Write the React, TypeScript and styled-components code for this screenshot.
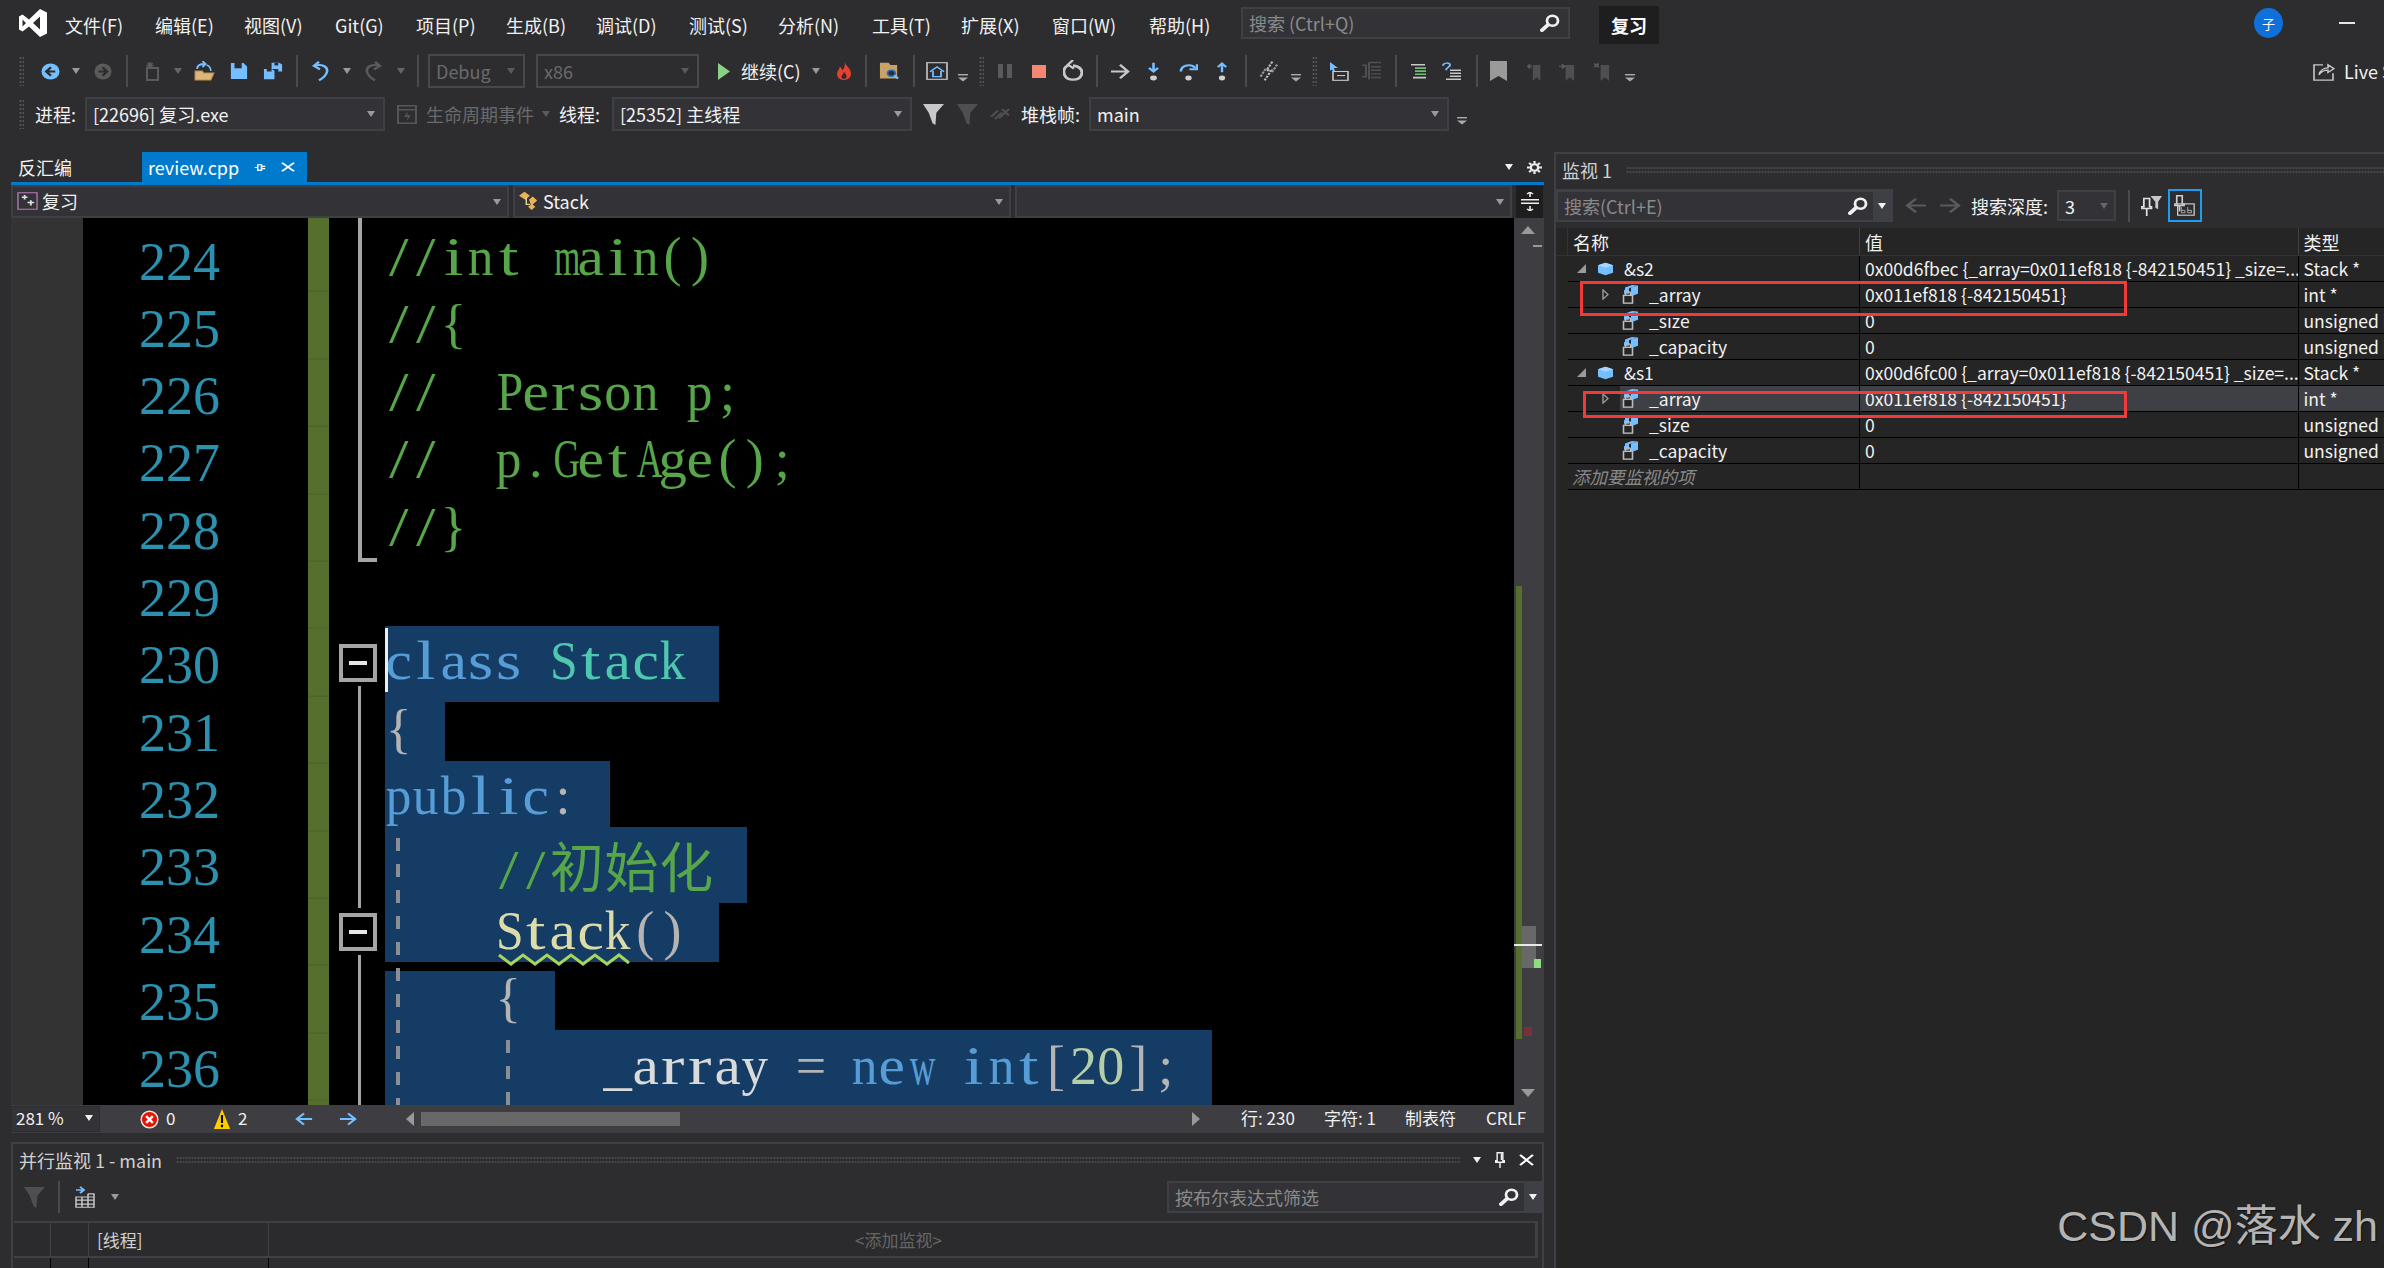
import React from 'react';
import styled, { createGlobalStyle } from 'styled-components';

const UI = `"Noto Sans CJK SC", "Noto Sans", sans-serif`;

const Global = createGlobalStyle`
  html, body { margin: 0; padding: 0; background: #2d2d30; }
  * { box-sizing: border-box; }
  #root { width: 2384px; height: 1268px; }
`;

const Page = styled.div`
  position: relative; width: 2384px; height: 1268px; overflow: hidden;
  background: #2d2d30; color: #f1f1f1; font: 18px/1 ${UI};
  display: flex; flex-direction: column;
`;

/* ---------- menu bar ---------- */
const MenuBar = styled.div`
  height: 46px; display: flex; align-items: center; flex: none; position: relative;
`;
const LogoBox = styled.div`margin-left: 17px; width: 32px; height: 32px; flex: none;`;
const MenuItem = styled.span<{ $ml: number }>`
  margin-left: ${p => p.$ml}px; color: #f1f1f1; font-size: 18px; white-space: nowrap; width: 58px; margin-top: 4px;
`;
const SearchBox = styled.div`
  margin-left: 34px; width: 329px; height: 32px; margin-top: -1px; background: #333337; border: 2px solid #3f3f46;
  display: flex; align-items: center; justify-content: space-between; padding: 0 8px 0 6px; color: #8a8a8a; font-size: 18px;
`;
const ProjectBadge = styled.div`
  margin-left: 29px; width: 60px; height: 38px; margin-top: 4px; background: #1e1e1e; color: #fff; font-weight: 700;
  display: flex; align-items: center; justify-content: center; font-size: 18px;
`;
const Avatar = styled.div`
  margin-left: 595px; width: 29px; height: 30px; border-radius: 50%; background: #0e70d8; color: #fff; font-size: 13px;
  display: flex; align-items: center; justify-content: center;
`;
const Minimize = styled.div`margin-left: 56px; width: 16px; height: 2px; background: #e6e6e6;`;

/* ---------- tool bars ---------- */
const ToolBar = styled.div<{ $h: number }>`
  height: ${p => p.$h}px; flex: none; display: flex; align-items: center;
`;
const Slot = styled.div<{ $w: number; $ml: number; $low?: boolean }>`
  width: ${p => p.$w}px; margin-left: ${p => p.$ml}px; flex: none; display: flex; align-items: center; justify-content: center;
  margin-top: ${p => (p.$low ? 14 : 0)}px;
  svg { display: block; }
`;
const Grip = styled.div<{ $ml: number }>`
  width: 5px; height: 30px; margin-left: ${p => p.$ml}px; flex: none;
  background: radial-gradient(circle, #55555a 1px, transparent 1.2px) 0 0 / 3px 4px;
`;
const Sep = styled.div<{ $ml: number }>`
  width: 2px; height: 32px; margin-left: ${p => p.$ml}px; background: #4a4a4f; flex: none;
`;
const Combo = styled.div<{ $w: number; $ml: number; $off?: boolean; $h?: number }>`
  width: ${p => p.$w}px; height: ${p => p.$h ?? 34}px; margin-left: ${p => p.$ml}px; flex: none; display: flex; align-items: center;
  justify-content: space-between; padding: 0 8px 0 6px; font-size: 18px; white-space: nowrap;
  border: 2px solid ${p => (p.$off ? '#47474c' : '#3f3f46')};
  background: ${p => (p.$off ? 'transparent' : '#333337')};
  color: ${p => (p.$off ? '#6a6a6a' : '#f1f1f1')};
`;
const Caret = styled.span<{ $c?: string }>`
  width: 0; height: 0; flex: none; border-left: 4.5px solid transparent; border-right: 4.5px solid transparent;
  border-top: 6px solid ${p => p.$c ?? '#9a9a9a'};
`;
const Label = styled.span<{ $ml: number; $w?: number; $c?: string }>`
  margin-left: ${p => p.$ml}px; ${p => (p.$w ? `width:${p.$w}px;` : '')} color: ${p => p.$c ?? '#f1f1f1'}; font-size: inherit; white-space: nowrap; flex: none;
`;

/* ---------- workspace ---------- */
const Workspace = styled.div`flex: 1; min-height: 0; display: flex; padding-top: 20px;`;
const LeftCol = styled.div`margin-left: 11px; width: 1533px; flex: none; display: flex; flex-direction: column; min-width: 0;`;

const TabStrip = styled.div`height: 30px; flex: none; display: flex; align-items: stretch; position: relative;`;
const DimTab = styled.div`width: 131px; padding-left: 7px; display: flex; align-items: center; font-size: 18px; color: #f1f1f1;`;
const ActiveTab = styled.div`
  width: 165px; background: #007acc; color: #fff; display: flex; align-items: center; padding-left: 6px; font-size: 18px;
`;
const TabIcons = styled.div`margin-left: auto; display: flex; align-items: center; gap: 14px; padding-right: 2px;`;
const BlueRule = styled.div`height: 3px; background: #007acc; flex: none;`;

const NavBar = styled.div`height: 33px; flex: none; display: flex; gap: 4px; padding-top: 0;`;
const NavCombo = styled.div<{ $w: number }>`
  width: ${p => p.$w}px; flex: none; background: #333337; border: 2px solid #3f3f46; display: flex; align-items: center;
  justify-content: space-between; padding: 0 6px 0 4px; font-size: 18px; color: #f1f1f1;
`;
const NavLabel = styled.span`display: flex; align-items: center; gap: 4px; margin-top: -2px;`;
const SplitBtn = styled.div`
  width: 27px; flex: none; margin-left: 0; background: #1e1e1e; display: flex; align-items: center; justify-content: center;
`;

const EditorRow = styled.div`height: 887px; flex: none; display: flex; overflow: hidden; position: relative; background: #000;`;
const LeftMargin = styled.div`width: 72px; flex: none; background: #333333;`;
const Numbers = styled.div`
  width: 137px; flex: none; padding: 10.6px 0 0 0; text-align: right; color: #2b91af;
  font: 54px/67.3px "Liberation Serif", serif;
`;
const NumberLine = styled.div`height: 67.3px;`;
const Spacer = styled.div`width: 88px; flex: none;`;
const ChangeBar = styled.div`
  width: 21px; flex: none; background: repeating-linear-gradient(180deg, #576f2e 0, #576f2e 66.4px, #4a5f27 66.4px, #4a5f27 67.4px);
  background-position: 0 6.6px;
`;
const Outline = styled.div`width: 56px; flex: none; position: relative;`;
const OutlineLine = styled.div<{ $top: number; $h?: number }>`
  position: absolute; left: 29px; width: 3px; top: ${p => p.$top}px; height: ${p => p.$h}px; background: #a5a5a5;
`;
const OutlineEnd = styled.div`
  position: absolute; left: 29px; top: 0; width: 19px; height: 344px;
  border-left: 4px solid #a5a5a5; border-bottom: 4px solid #a5a5a5;
`;
const FoldBox = styled.div<{ $top: number }>`
  position: absolute; left: 10px; top: ${p => p.$top}px; width: 38px; height: 38px; background: #000; border: 4px solid #a5a5a5;
  display: flex; align-items: center; justify-content: center;
  &::after { content: ''; width: 18px; height: 4px; background: #e6e6e6; }
`;
const CodeArea = styled.div`flex: 1; min-width: 0; position: relative; isolation: isolate; padding-top: 6px; overflow: hidden;`;
const CodeLine = styled.div`height: 67.4px; white-space: pre;`;
const CodeText = styled.span<{ $sel?: boolean; $t?: number; $b?: number }>`
  position: relative; display: inline-block; height: 67.4px; padding-right: ${p => (p.$sel ? 33 : 0)}px;
  font: 54px/67.4px "Liberation Serif", "Noto Sans CJK SC", serif; white-space: pre;
  &::before {
    content: ''; position: absolute; left: 0; right: 0; z-index: -1;
    top: ${p => p.$t ?? 0}px; bottom: ${p => p.$b ?? 0}px;
    background: ${p => (p.$sel ? '#143c65' : 'transparent')};
  }
`;
const Cell = styled.span<{ $wide?: boolean; $c: string; $sx?: number }>`
  display: inline-block; width: ${p => (p.$wide ? 54.8 : 27.4)}px; text-align: center; color: ${p => p.$c};
  transform: scaleX(${p => p.$sx ?? 1});
  font-family: ${p => (p.$wide ? `"Noto Sans CJK SC", sans-serif` : `"Liberation Serif", serif`)};
`;
const Caretline = styled.div`position: absolute; left: 0; top: 410px; width: 3px; height: 64px; background: #eee;`;
const Guide = styled.div<{ $left: number; $top: number }>`
  position: absolute; left: ${p => p.$left}px; top: ${p => p.$top}px; bottom: 0; width: 4px;
  background: repeating-linear-gradient(180deg, #8a8f96 0, #8a8f96 13px, transparent 13px, transparent 26px);
`;
const Squiggle = styled.svg`position: absolute; left: 113px; top: 735px;`;

const VScroll = styled.div`width: 30px; flex: none; background: #3e3e42; position: relative; margin-left: auto;`;
const ArrowUp = styled.div`
  position: absolute; left: 7px; top: 8px; width: 0; height: 0; border-left: 7px solid transparent; border-right: 7px solid transparent; border-bottom: 8px solid #999;
`;
const ArrowDown = styled.div`
  position: absolute; left: 7px; bottom: 8px; width: 0; height: 0; border-left: 7px solid transparent; border-right: 7px solid transparent; border-top: 8px solid #999;
`;
const Mark = styled.div<{ $l: number; $t: number; $w: number; $h: number; $c: string }>`
  position: absolute; left: ${p => p.$l}px; top: ${p => p.$t}px; width: ${p => p.$w}px; height: ${p => p.$h}px; background: ${p => p.$c};
`;

const StatusBar = styled.div`
  height: 28px; flex: none; background: #3e3e42; display: flex; align-items: center; font-size: 17px; color: #f1f1f1;
`;
const StatusText = styled(Label)`margin-top: -3px;`;
const ZoomBox = styled.div`
  width: 89px; height: 26px; background: #333337; border: 1px solid #2d2d30; display: flex; align-items: center; justify-content: space-between;
  padding: 0 6px 3px 4px; flex: none; font-size: 17px;
`;
const HThumb = styled.div`width: 259px; height: 14px; background: #686868; margin-left: 7px; flex: none;`;
const TriLeft = styled.div<{ $ml: number }>`
  margin-left: ${p => p.$ml}px; width: 0; height: 0; flex: none; border-top: 7px solid transparent; border-bottom: 7px solid transparent; border-right: 8px solid #999;
`;
const TriRight = styled.div<{ $ml: number }>`
  margin-left: ${p => p.$ml}px; width: 0; height: 0; flex: none; border-top: 7px solid transparent; border-bottom: 7px solid transparent; border-left: 8px solid #999;
`;

/* parallel watch */
const ParallelPanel = styled.div`
  margin-top: 9px; flex: 1; min-height: 0; border: 2px solid #3f3f46; border-bottom: none; display: flex; flex-direction: column; background: #2d2d30;
`;
const PanelTitle = styled.div<{ $h: number }>`
  height: ${p => p.$h}px; flex: none; display: flex; align-items: center; color: #d0d0d0; padding: 0 0 3px 6px; font-size: 18px;
`;
const TitleGrip = styled.div`
  flex: 1; height: 8px; margin-left: 14px;
  background: radial-gradient(circle, #4a4a4e 1px, transparent 1.2px) 0 0 / 3px 4px;
`;
const PanelBtns = styled.div`display: flex; align-items: center; gap: 14px; margin: 0 8px 0 12px;`;
const ParallelTools = styled.div`height: 36px; margin-bottom: 6px; flex: none; display: flex; align-items: center;`;
const FilterInput = styled.div`
  width: 375px; height: 32px; margin-left: auto; background: #3f3f46; display: flex; align-items: center; padding-right: 4px; flex: none;
`;
const FilterInner = styled.div`
  flex: 1; height: 28px; background: #333337; margin: 2px 0 2px 2px; display: flex; align-items: center; justify-content: space-between;
  color: #8a8a8a; font-size: 18px; padding: 0 5px 0 6px;
`;
const ParHead = styled.div`
  margin-left: 1px; margin-right: 4px; height: 37px; flex: none; background: #2b2b2e; border-top: 2px solid #3f3f46; border-bottom: 2px solid #3f3f46; display: flex; border-right: 2px solid #3f3f46; font-size: 17px;
`;
const ParCol = styled.div<{ $w: number }>`
  width: ${p => p.$w}px; flex: ${p => (p.$w ? 'none' : 1)}; border-right: 1px solid #3f3f46; display: flex; align-items: center; padding-left: 8px; color: #d0d0d0;
`;
const ParHint = styled.span`margin-left: 578px; color: #656565;`;
const ParBody = styled.div`flex: 1; margin-left: 1px; display: flex;`;
const ParBodyCol = styled.div<{ $w: number }>`width: ${p => p.$w}px; border-right: 1px solid #000; flex: none;`;

/* watch panel */
const WatchPanel = styled.div`
  margin-left: 10px; flex: 1; min-width: 0; border-left: 2px solid #3f3f46; border-top: 2px solid #3f3f46; display: flex; flex-direction: column; background: #252526;
`;
const WatchTop = styled.div`background: #2d2d30; flex: none;`;
const WatchTools = styled.div`height: 33px; margin-bottom: 6px; display: flex; align-items: center;`;
const WatchSearch = styled.div`
  width: 337px; height: 33px; flex: none; background: #3f3f46; display: flex; align-items: center; padding-right: 6px;
`;
const WatchHead = styled.div`height: 28px; display: flex; align-items: stretch; background: #252526; font-size: 18px; border-bottom: 1px solid #333; flex: none;`;
const HeadLead = styled.div`width: 12px; border-right: 1px solid #333; flex: none;`;
const HeadCell = styled.div<{ $w: number }>`
  width: ${p => p.$w}px; flex: none; padding-left: 5px; display: flex; align-items: center; border-right: 1px solid #3f3f46; color: #f1f1f1;
`;
const Rows = styled.div`position: relative; flex: 1;`;
const Row = styled.div`
  height: 26px; display: flex; align-items: stretch; font-size: 17.5px; color: #f1f1f1; padding-left: 12px;
`;
const NameCell = styled.div<{ $hot?: boolean }>`
  width: 292px; flex: none; border-bottom: 1px solid #000; border-right: 1px solid #000; display: flex; align-items: center; position: relative;
  background: ${p => (p.$hot ? 'linear-gradient(90deg, transparent 52px, #3f3f46 52px)' : 'transparent')};
`;
const ValCell = styled.div<{ $w: number; $hot?: boolean }>`
  width: ${p => p.$w}px; flex: none; padding-left: 5px; white-space: nowrap; overflow: hidden; display: flex; align-items: center;
  border-bottom: 1px solid #000; border-right: 1px solid #000; background: ${p => (p.$hot ? '#3f3f46' : 'transparent')};
`;
const Indent = styled.div<{ $w: number }>`width: ${p => p.$w}px; flex: none; display: flex; align-items: center; justify-content: flex-end;`;
const AddHint = styled.span`color: #8a8a8a; font-style: italic; padding-left: 4px;`;
const RedBox = styled.div<{ $t: number; $l: number; $h: number }>`
  position: absolute; top: ${p => p.$t}px; left: ${p => p.$l}px; width: ${p => 571 - p.$l}px; height: ${p => p.$h}px; border: 3px solid #f33a3a;
`;
const DepthCombo = styled.div`
  width: 59px; height: 31px; margin-left: 9px; flex: none; border: 2px solid #3f3f46; background: #333337; display: flex; align-items: center; justify-content: space-between; padding: 0 6px;
`;
const ActiveBtn = styled.div`
  width: 34px; height: 33px; margin-left: 6px; border: 2px solid #1e9cf0; background: #2d2d30; display: flex; align-items: center; justify-content: center; flex: none;
`;
const Watermark = styled.div`
  position: absolute; right: 6px; bottom: 20px; font: 43px/1 "Liberation Sans", "Noto Sans CJK SC", sans-serif; color: #b4b4b4; white-space: nowrap; text-shadow: 1px 1px 1px #111;
`;

/* ---------- icons ---------- */
const P = ({ w, h, vw, vh, children }: { w: number; h: number; vw: number; vh: number; children: React.ReactNode }) => (
  <svg width={w} height={h} viewBox={`0 0 ${vw} ${vh}`} fill="none" preserveAspectRatio="none">{children}</svg>
);
const Logo = () => (
  <P w={32} h={32} vw={32} vh={32}>
    <path fillRule="evenodd" fill="#fff" d="M23 2 L30 5.5 V26.5 L23 30 L12 19.5 L5.5 24.5 L2 22.5 V9.5 L5.5 7.5 L12 12.5 Z M23 9.5 L16 16 L23 22.5 Z M5.5 12.5 V19.5 L9 16 Z" />
  </P>
);
const Circle = ({ c, dir, w, h }: { c: string; dir: 1 | -1; w: number; h: number }) => (
  <P w={w} h={h} vw={20} vh={20}><circle cx="10" cy="10" r="9.5" fill={c} /><path d={dir < 0 ? 'M10.5 5 L5.5 10 L10.5 15 M6 10 H15' : 'M9.5 5 L14.5 10 L9.5 15 M14 10 H5'} stroke="#2d2d30" strokeWidth="2.6" /></P>
);
const NewItem = () => (
  <P w={20} h={20} vw={20} vh={20}><path d="M5 7 H16 V19 H5 Z" stroke="#5a5a5a" strokeWidth="2" /><path d="M8 1 V8 M4.5 4.5 H11.5 M5.5 2 L10.5 7 M10.5 2 L5.5 7" stroke="#5a5a5a" strokeWidth="1.6" /></P>
);
const OpenIcon = () => (
  <P w={21} h={20} vw={20} vh={20}><path d="M1 10 H8 L9 12 H19 L16 19 H1 Z" fill="#dcb67a" stroke="#c09048" strokeWidth="1" /><path d="M3 8 C3 4 6 3 10 3 M8 0 L11 3 L8 6" stroke="#75beff" strokeWidth="1.8" /><path d="M16 10 C16 7 15 5 12 4" stroke="#75beff" strokeWidth="1.5" /></P>
);
const SaveIcon = () => (
  <P w={18} h={18} vw={20} vh={20}><path d="M1 1 H15 L19 5 V19 H1 Z" fill="#75beff" /><path d="M5 1 H13 V7 H5 Z" fill="#2d2d30" /></P>
);
const SaveAll = () => (
  <P w={21} h={19} vw={22} vh={22}><path d="M9 1 H17 L20 3 V11 H16 V8 H9 Z" fill="#75beff" /><path d="M12 1 H16 V4 H12 Z" fill="#2d2d30" /><path d="M1 8 H9 L12 10 V20 H1 Z" fill="#75beff" /><path d="M4 8 H9 V11 H4 Z" fill="#2d2d30" /></P>
);
const UndoShape = styled.span<{ $flip?: boolean }>`display: block; transform: ${p => (p.$flip ? 'scaleX(-1)' : 'none')};`;
const UndoIcon = ({ c, flip }: { c: string; flip?: boolean }) => (
  <UndoShape $flip={flip}>
    <P w={18} h={22} vw={18} vh={26}>
      <path d="M8 2 L3 7 L9 11" stroke={c} strokeWidth="2.6" /><path d="M3 7 C11 4 17 8 16 14 C15 19 11 22 8 24" stroke={c} strokeWidth="2.6" />
    </P>
  </UndoShape>
);
const PlayIcon = () => (<P w={12} h={17} vw={12} vh={18}><path d="M0 0 L12 9 L0 18 Z" fill="#89d185" /></P>);
const Flame = () => (
  <P w={14} h={18} vw={15} vh={24}><path d="M8 0 C9 5 15 8 15 16 C15 20 12 24 7.5 24 C3 24 0 20 0 16 C0 12 3 10 3 6 C5 8 5 10 6 11 C8 8 9 4 8 0 Z" fill="#e8402f" /><path d="M7.5 13 C9 16 11 17 10 21 C9 23 6 23 5 21 C4 18 7 17 7.5 13 Z" fill="#2d2d30" /></P>
);
const FolderFind = () => (
  <P w={21} h={18} vw={22} vh={24}><path d="M1 1 H10 L12 4 H19 V22 H1 Z" fill="#c9a267" /><circle cx="13" cy="15" r="4" stroke="#1e6fb8" strokeWidth="2" fill="#2d2d30" /><path d="M16 18 L20 22" stroke="#75beff" strokeWidth="2.4" /></P>
);
const HomeBox = () => (
  <P w={22} h={18} vw={22} vh={26}><rect x="1" y="1" width="20" height="24" stroke="#c8c8c8" strokeWidth="1.6" /><path d="M4 14 L11 7 L18 14 M7 13 V21 H15 V13" stroke="#75beff" strokeWidth="1.8" /></P>
);
const Overflow = () => (
  <P w={10} h={8} vw={10} vh={14}><rect y="0" width="10" height="2.5" fill="#aaa" /><path d="M0 6 H10 L5 13 Z" fill="#aaa" /></P>
);
const Pause = () => (<P w={14} h={14} vw={14} vh={20}><rect width="5" height="20" fill="#5a5a5a" /><rect x="9" width="5" height="20" fill="#5a5a5a" /></P>);
const Stop = () => <P w={14} h={13} vw={14} vh={20}><rect width="14" height="20" fill="#f48771" /></P>;
const Restart = () => (
  <P w={20} h={22} vw={20} vh={28}><path d="M6 6 C1 9 0 14 1.5 19 C4 27 16 27 18.5 19 C20 13 17 8 10 7" stroke="#c8c8c8" strokeWidth="3" /><path d="M10 0 L5 6 L11 11" stroke="#c8c8c8" strokeWidth="2.6" /></P>
);
const ArrowRight = ({ c = '#c8c8c8', w = 20, h = 17 }: { c?: string; w?: number; h?: number }) => (
  <P w={w} h={h} vw={20} vh={20}><path d="M1 10 H18 M10 2 L18 10 L10 18" stroke={c} strokeWidth="2.6" /></P>
);
const ArrowLeft = ({ c = '#c8c8c8', w = 20, h = 17 }: { c?: string; w?: number; h?: number }) => (
  <P w={w} h={h} vw={20} vh={20}><path d="M19 10 H2 M10 2 L2 10 L10 18" stroke={c} strokeWidth="2.6" /></P>
);
const StepInto = () => (
  <P w={13} h={19} vw={13} vh={26}><path d="M6.5 1 V12 M2 8 L6.5 13 L11 8" stroke="#75beff" strokeWidth="2.6" /><circle cx="6.5" cy="22" r="3.4" fill="#d0d0d0" /></P>
);
const StepOut = () => (
  <P w={13} h={19} vw={13} vh={26}><path d="M6.5 14 V3 M2 7 L6.5 2 L11 7" stroke="#75beff" strokeWidth="2.6" /><circle cx="6.5" cy="22" r="3.4" fill="#d0d0d0" /></P>
);
const StepOver = () => (
  <P w={19} h={19} vw={20} vh={26}><path d="M2 13 C2 4 13 2 17 8" stroke="#75beff" strokeWidth="2.8" /><path d="M11 10 H19 V3" stroke="#75beff" strokeWidth="2.6" /><circle cx="10" cy="22" r="3.4" fill="#d0d0d0" /></P>
);
const Hatch = () => (
  <P w={21} h={20} vw={22} vh={28}><path d="M15 1 L9 13 L14 13 L7 27" stroke="#bdbdbd" strokeWidth="2.4" strokeDasharray="3 1.5" /><path d="M20 5 L14 17 M8 11 L2 23" stroke="#9a9a9a" strokeWidth="2.4" strokeDasharray="3 1.5" /></P>
);
const CursorBox = () => (
  <P w={20} h={19} vw={20} vh={28}><path d="M1 0 L9 9 H5 L6 14 H4 L3 11 L1 13 Z" fill="#75beff" /><rect x="4" y="14" width="15" height="13" stroke="#c8c8c8" strokeWidth="1.6" /><path d="M8 20 H16" stroke="#c8c8c8" strokeWidth="1.6" /></P>
);
const DimLines = () => (
  <P w={22} h={20} vw={22} vh={28}><path d="M1 6 H5 V22 H1 M8 2 H20 M10 8 H20 M10 13 H20 M10 18 H20 M10 23 H20 M8 2 V26" stroke="#4f4f4f" strokeWidth="2" /></P>
);
const IndentA = () => (
  <P w={16} h={15} vw={16} vh={22}><path d="M0 1 H14 M2 20 H15" stroke="#c8c8c8" strokeWidth="2.4" /><path d="M4 6 H15 M4 10.5 H15 M4 15 H15" stroke="#6fbf73" strokeWidth="2.4" /></P>
);
const IndentB = () => (
  <P w={20} h={18} vw={20} vh={24}><path d="M1 5 C1 1 8 0 8 4 C8 7 4 7 4 11" stroke="#75beff" strokeWidth="2" /><path d="M8 11 H19 M8 15 H19 M8 19 H19 M4 23 H19" stroke="#c8c8c8" strokeWidth="1.8" /></P>
);
const Bookmark = () => (
  <P w={17} h={20} vw={17} vh={28}><path d="M0 0 H17 V28 L8.5 21 L0 28 Z" fill="#9a9a9a" /></P>
);
const BookmarkSm = ({ mark }: { mark: string }) => (
  <P w={17} h={19} vw={18} vh={26}><path d="M7 4 H16 V26 L11.5 21 L7 26 Z" fill="#4f4f4f" /><path d={mark} stroke="#5a5a5a" strokeWidth="2" /></P>
);
const Filter = ({ c = '#c8c8c8' }: { c?: string }) => (
  <P w={21} h={21} vw={22} vh={24}><path d="M0 0 H22 L14 10 L13 24 L10 22 L6 10 Z" fill={c} /></P>
);
const Broken = () => (
  <P w={22} h={14} vw={22} vh={20}><path d="M2 14 L9 5 M6 17 L13 8 M10 16 L20 3 M13 3 L20 12" stroke="#4f4f4f" strokeWidth="2.4" /></P>
);
const Magnifier = () => (
  <P w={20} h={18} vw={20} vh={20}><circle cx="12.5" cy="7.5" r="5.5" stroke="#f1f1f1" strokeWidth="2.8" /><path d="M8 12 L2 18" stroke="#f1f1f1" strokeWidth="4" strokeLinecap="round" /></P>
);
const LifeIcon = () => (
  <P w={20} h={19} vw={20} vh={24}><rect x="1" y="1" width="18" height="22" stroke="#555" strokeWidth="2" /><path d="M1 6 H19" stroke="#555" strokeWidth="2" /><path d="M11 8 L7 15 H11 L9 21 L14 13 H10 Z" fill="#555" /></P>
);
const PinH = () => (
  <P w={12} h={9} vw={16} vh={16}><path d="M1 8 H5 M5 3 H10 V13 H5 Z M10 6 H15 M10 10 H15" stroke="#fff" strokeWidth="2" /></P>
);
const PinV = () => (
  <P w={10} h={16} vw={14} vh={22}><path d="M3 1 H11 V12 H13 V14 H1 V12 H3 Z M7 14 V22" stroke="#f1f1f1" strokeWidth="2" /><path d="M8 2 H10 V11 H8 Z" fill="#f1f1f1" /></P>
);
const Close = ({ w = 14, h = 10 }: { w?: number; h?: number }) => (
  <P w={w} h={h} vw={14} vh={14}><path d="M1 1 L13 13 M13 1 L1 13" stroke="#fff" strokeWidth="2.2" /></P>
);
const Gear = () => (
  <P w={15} h={13} vw={16} vh={16}><circle cx="8" cy="8" r="4" stroke="#eee" strokeWidth="2.6" /><path d="M8 0 V3 M8 13 V16 M0 8 H3 M13 8 H16 M2.3 2.3 L4.4 4.4 M11.6 11.6 L13.7 13.7 M2.3 13.7 L4.4 11.6 M11.6 4.4 L13.7 2.3" stroke="#eee" strokeWidth="2.4" /></P>
);
const ProjIcon = () => (
  <P w={21} h={18} vw={22} vh={24}><rect x="1" y="1" width="20" height="22" stroke="#b57ab5" strokeWidth="1.4" /><path d="M5 7 H11 M8 4 V10 M11 14 H18 M14.5 11 V18" stroke="#ddd" strokeWidth="2" /></P>
);
const ClassIcon = () => (
  <P w={20} h={19} vw={22} vh={24}><path d="M0 6 L6 1 L12 6 L7 11 Z" fill="#e8b45a" /><path d="M11 11 L15 7 L20 12 L15 17 L18 20 L14 24 L10 20 L13 17 Z" fill="#e8b45a" /><path d="M8 8 V17 H12" stroke="#e0d0a0" strokeWidth="1.6" /></P>
);
const SplitIcon = () => (
  <P w={18} h={19} vw={18} vh={26}><path d="M0 10.5 H18 M0 15.5 H18" stroke="#f1f1f1" strokeWidth="2" /><path d="M9 0 V7 M6 3 L9 0 L12 3 M9 26 V19 M6 23 L9 26 L12 23" stroke="#f1f1f1" strokeWidth="1.6" /></P>
);
const ErrorIcon = () => (
  <P w={19} h={19} vw={20} vh={20}><circle cx="10" cy="10" r="9.5" fill="#e8e8e8" /><circle cx="10" cy="10" r="8" fill="#e51400" /><path d="M6.5 6.5 L13.5 13.5 M13.5 6.5 L6.5 13.5" stroke="#fff" strokeWidth="2.6" /></P>
);
const WarnIcon = () => (
  <P w={18} h={20} vw={20} vh={20}><path d="M10 0 L19 20 H1 Z" fill="#fc0" /><path d="M10 6 V14" stroke="#000" strokeWidth="2.4" /><circle cx="10" cy="17" r="1.4" fill="#000" /></P>
);
const GridIcon = () => (
  <P w={22} h={22} vw={22} vh={28}><path d="M2 5 H9 M6 1 L10 5 L6 9" stroke="#75beff" strokeWidth="2" /><path d="M2 14 H20 V27 H2 Z M2 18 H20 M2 23 H20 M8 14 V27 M14 10 V27 M14 10 H20 V14" stroke="#c8c8c8" strokeWidth="1.5" /></P>
);
const PinFilter = () => (
  <P w={21} h={20} vw={22} vh={24}><path d="M3 3 H9 V13 H11 V15 H1 V13 H3 Z M6 15 V24" stroke="#e0e0e0" strokeWidth="1.8" /><path d="M10 0 H22 L18 7 V16 L15 14 V7 Z" fill="#c8c8c8" /></P>
);
const PinTab = () => (
  <P w={22} h={21} vw={24} vh={26}><path d="M3 1 H9 V11 H11 V13 H1 V11 H3 Z M6 13 V20" stroke="#ccc" strokeWidth="1.8" /><rect x="4" y="11" width="18" height="14" stroke="#ccc" strokeWidth="1.4" /><path d="M8 22 V15 M8 19 H12 V22 H8 M15 15 V22 H19 V19 H15" stroke="#bbb" strokeWidth="1" /></P>
);
const ShareIcon = () => (
  <P w={22} h={20} vw={22} vh={26}><path d="M10 5 H1 V25 H20 V16" stroke="#c8c8c8" strokeWidth="1.6" /><path d="M6 18 C7 12 11 9 15 9 V5 L21 10 L15 15 V12 C11 12 8 14 6 18 Z" stroke="#c8c8c8" strokeWidth="1.6" /></P>
);
const Cube = () => (
  <P w={17} h={14} vw={17} vh={17}><path d="M8.5 1 L16 4 V13 L8.5 16 L1 13 V4 Z" fill="#75beff" /><path d="M1 4 L8.5 7 L16 4 L8.5 1 Z" fill="#a8d6ff" /></P>
);
const MemberIcon = () => (
  <P w={17} h={19} vw={17} vh={22}><path d="M9 3 L16 0.5 V10 L9 13 Z" fill="#75beff" /><path d="M3 6 L9 3 L16 0.5 L10 0 L3 3 Z" fill="#75beff" /><path d="M2 6 L7 3 V10 H2 Z" fill="#75beff" /><rect x="1.5" y="12" width="9" height="9" fill="#252526" stroke="#bbb" strokeWidth="1.6" /><path d="M3.5 12 V9.5 C3.5 7 8.5 7 8.5 9.5 V12" stroke="#bbb" strokeWidth="1.6" /></P>
);
const TriOpen = () => <P w={9} h={9} vw={10} vh={10}><path d="M10 0 V10 H0 Z" fill="#9a9a9a" /></P>;
const TriClosed = () => <P w={7} h={11} vw={7} vh={13}><path d="M1 1 L6 6.5 L1 12 Z" stroke="#9a9a9a" strokeWidth="1.4" /></P>;

/* ---------- data ---------- */
type ToolItem = { t: 'i' | 'g' | 's'; n?: React.ReactNode; w?: number; ml: number; low?: boolean };
const toolbarA: ToolItem[] = [
  { t: 'g', ml: 19 },
  { t: 'i', n: <Circle c="#75beff" dir={-1} w={19} h={17} />, w: 19, ml: 17 },
  { t: 'i', n: <Caret />, w: 8, ml: 12 },
  { t: 'i', n: <Circle c="#5a5a5a" dir={1} w={18} h={17} />, w: 18, ml: 14 },
  { t: 's', ml: 14 },
  { t: 'i', n: <NewItem />, w: 20, ml: 14 },
  { t: 'i', n: <Caret $c="#666" />, w: 8, ml: 12 },
  { t: 'i', n: <OpenIcon />, w: 21, ml: 12 },
  { t: 'i', n: <SaveIcon />, w: 18, ml: 15 },
  { t: 'i', n: <SaveAll />, w: 21, ml: 15 },
  { t: 's', ml: 12 },
  { t: 'i', n: <UndoIcon c="#75beff" />, w: 18, ml: 13 },
  { t: 'i', n: <Caret />, w: 8, ml: 14 },
  { t: 'i', n: <UndoIcon c="#5a5a5a" flip />, w: 18, ml: 14 },
  { t: 'i', n: <Caret $c="#666" />, w: 8, ml: 14 },
  { t: 's', ml: 12 },
];
const toolbarB: ToolItem[] = [
  { t: 'i', n: <Caret />, w: 8, ml: 11 },
  { t: 'i', n: <Flame />, w: 14, ml: 17 },
  { t: 's', ml: 14 },
  { t: 'i', n: <FolderFind />, w: 21, ml: 12 },
  { t: 's', ml: 13 },
  { t: 'i', n: <HomeBox />, w: 22, ml: 11 },
  { t: 'i', n: <Overflow />, w: 10, ml: 10, low: true },
  { t: 'g', ml: 11 },
  { t: 'i', n: <Pause />, w: 14, ml: 14 },
  { t: 'i', n: <Stop />, w: 14, ml: 20 },
  { t: 'i', n: <Restart />, w: 20, ml: 17 },
  { t: 's', ml: 13 },
  { t: 'i', n: <ArrowRight />, w: 20, ml: 12 },
  { t: 'i', n: <StepInto />, w: 13, ml: 17 },
  { t: 'i', n: <StepOver />, w: 19, ml: 19 },
  { t: 'i', n: <StepOut />, w: 12, ml: 18 },
  { t: 's', ml: 17 },
  { t: 'i', n: <Hatch />, w: 21, ml: 11 },
  { t: 'i', n: <Overflow />, w: 10, ml: 12, low: true },
  { t: 'g', ml: 11 },
  { t: 'i', n: <CursorBox />, w: 20, ml: 12 },
  { t: 'i', n: <DimLines />, w: 22, ml: 12 },
  { t: 's', ml: 12 },
  { t: 'i', n: <IndentA />, w: 16, ml: 14 },
  { t: 'i', n: <IndentB />, w: 20, ml: 15 },
  { t: 's', ml: 14 },
  { t: 'i', n: <Bookmark />, w: 17, ml: 12 },
  { t: 'i', n: <BookmarkSm mark="M1 6 H6 M4 3 L1 6 L4 9" />, w: 15, ml: 20 },
  { t: 'i', n: <BookmarkSm mark="M0 6 H6 M3 3 L6 6 L3 9" />, w: 17, ml: 17 },
  { t: 'i', n: <BookmarkSm mark="M0 2 L5 7 M5 2 L0 7" />, w: 18, ml: 17 },
  { t: 'i', n: <Overflow />, w: 10, ml: 14, low: true },
];
const renderTools = (items: ToolItem[]) =>
  items.map((it, i) =>
    it.t === 'g' ? <Grip key={i} $ml={it.ml} /> :
    it.t === 's' ? <Sep key={i} $ml={it.ml} /> :
    <Slot key={i} $w={it.w!} $ml={it.ml} $low={it.low}>{it.n}</Slot>
  );

const menus: [string, number][] = [
  ['文件(F)', 16], ['编辑(E)', 32], ['视图(V)', 31], ['Git(G)', 33], ['项目(P)', 23], ['生成(B)', 32],
  ['调试(D)', 32], ['测试(S)', 35], ['分析(N)', 31], ['工具(T)', 36], ['扩展(X)', 31], ['窗口(W)', 33], ['帮助(H)', 39],
];

const C = { cm: '#57a64a', kw: '#569cd6', ty: '#4ec9b0', fn: '#dcdcaa', id: '#dadada', op: '#b4b4b4', nu: '#b5cea8' };
const SCALE: Record<string, number> = {
  m: 0.62, w: 0.66, A: 0.66, G: 0.68, P: 0.88, S: 0.92, n: 0.95, p: 0.95, b: 0.95, k: 0.95, h: 0.95, u: 0.95,
  c: 1.1, e: 1.1, a: 1.1, s: 1.2, t: 1.3, r: 1.3, i: 1.3, l: 1.3, y: 0.98, g: 1.05, _: 1.05, '/': 1.3,
};

type Tok = [string, string];
const Code = ({ toks }: { toks: Tok[] }) => (
  <>
    {toks.flatMap(([text, c], i) =>
      Array.from(text).map((ch, j) => {
        const wide = ch.charCodeAt(0) > 255;
        return <Cell key={`${i}-${j}`} $c={c} $wide={wide} $sx={SCALE[ch]}>{ch}</Cell>;
      })
    )}
  </>
);

const codeLines: { toks: Tok[]; sel?: boolean; t?: number; b?: number }[] = [
  { toks: [['//int main()', C.cm]] },
  { toks: [['//{', C.cm]] },
  { toks: [['//  Person p;', C.cm]] },
  { toks: [['//  p.GetAge();', C.cm]] },
  { toks: [['//}', C.cm]] },
  { toks: [[' ', C.id]] },
  { toks: [['class', C.kw], [' ', C.id], ['Stack', C.ty]], sel: true, t: -2.4, b: -6.2 },
  { toks: [['{', C.op]], sel: true, t: 6.2, b: 2.2 },
  { toks: [['public', C.kw], [':', C.op]], sel: true, t: -2.2, b: 3.8 },
  { toks: [['    ', C.id], ['//初始化', C.cm]], sel: true, t: -3.8, b: -4.8 },
  { toks: [['    ', C.id], ['Stack', C.fn], ['()', C.op]], sel: true, t: 4.8, b: 3 },
  { toks: [['    ', C.id], ['{', C.op]], sel: true, t: 5.6, b: 2.8 },
  { toks: [['        ', C.id], ['_array', C.id], [' ', C.id], ['=', C.op], [' ', C.id], ['new', C.kw], [' ', C.id], ['int', C.kw], ['[', C.op], ['20', C.nu], [']', C.op], [';', C.op]], sel: true, t: -2.8, b: -8 },
];

const watchRows: { lead?: boolean; name: string; val: string; ty: string; hot?: boolean }[] = [
  { lead: true, name: '&s2', val: '0x00d6fbec {_array=0x011ef818 {-842150451} _size=...', ty: 'Stack *' },
  { name: '_array', val: '0x011ef818 {-842150451}', ty: 'int *' },
  { name: '_size', val: '0', ty: 'unsigned int' },
  { name: '_capacity', val: '0', ty: 'unsigned int' },
  { lead: true, name: '&s1', val: '0x00d6fc00 {_array=0x011ef818 {-842150451} _size=...', ty: 'Stack *' },
  { name: '_array', val: '0x011ef818 {-842150451}', ty: 'int *', hot: true },
  { name: '_size', val: '0', ty: 'unsigned int' },
  { name: '_capacity', val: '0', ty: 'unsigned int' },
];

export default function App() {
  return (
    <Page>
      <Global />
      <MenuBar>
        <LogoBox><Logo /></LogoBox>
        {menus.map(([m, ml]) => <MenuItem key={m} $ml={ml}>{m}</MenuItem>)}
        <SearchBox><span>搜索 (Ctrl+Q)</span><Magnifier /></SearchBox>
        <ProjectBadge>复习</ProjectBadge>
        <Avatar>子</Avatar>
        <Minimize />
      </MenuBar>

      <ToolBar $h={50}>
        {renderTools(toolbarA)}
        <Combo $w={97} $ml={9} $off>Debug<Caret $c="#5a5a5a" /></Combo>
        <Combo $w={163} $ml={11} $off>x86<Caret $c="#5a5a5a" /></Combo>
        <Slot $w={12} $ml={19}><PlayIcon /></Slot>
        <Label $ml={11} $w={60}>继续(C)</Label>
        {renderTools(toolbarB)}
        <Slot $w={22} $ml={678}><ShareIcon /></Slot>
        <Label $ml={9}>Live Share</Label>
      </ToolBar>

      <ToolBar $h={36}>
        <Grip $ml={19} />
        <Label $ml={11} $w={50}>进程:</Label>
        <Combo $w={300} $ml={0}>[22696] 复习.exe<Caret /></Combo>
        <Slot $w={20} $ml={12}><LifeIcon /></Slot>
        <Label $ml={9} $w={116} $c="#6a6a6a">生命周期事件</Label>
        <Caret $c="#5a5a5a" />
        <Label $ml={9} $w={53}>线程:</Label>
        <Combo $w={300} $ml={0}>[25352] 主线程<Caret /></Combo>
        <Slot $w={22} $ml={10}><Filter /></Slot>
        <Slot $w={22} $ml={12}><Filter c="#4f4f4f" /></Slot>
        <Slot $w={22} $ml={11}><Broken /></Slot>
        <Label $ml={10} $w={68}>堆栈帧:</Label>
        <Combo $w={360} $ml={0}>main<Caret /></Combo>
        <Slot $w={10} $ml={8} $low><Overflow /></Slot>
      </ToolBar>

      <Workspace>
        <LeftCol>
          <TabStrip>
            <DimTab>反汇编</DimTab>
            <ActiveTab>
              <span>review.cpp</span>
              <Slot $w={12} $ml={15}><PinH /></Slot>
              <Slot $w={14} $ml={15}><Close /></Slot>
            </ActiveTab>
            <TabIcons><Caret $c="#f1f1f1" /><Gear /></TabIcons>
          </TabStrip>
          <BlueRule />
          <NavBar>
            <NavCombo $w={498}><NavLabel><ProjIcon />复习</NavLabel><Caret /></NavCombo>
            <NavCombo $w={498}><NavLabel><ClassIcon />Stack</NavLabel><Caret /></NavCombo>
            <NavCombo $w={497}><span /><Caret /></NavCombo>
            <SplitBtn><SplitIcon /></SplitBtn>
          </NavBar>
          <EditorRow>
            <LeftMargin />
            <Numbers>
              {Array.from({ length: 13 }, (_, i) => <NumberLine key={i}>{224 + i}</NumberLine>)}
            </Numbers>
            <Spacer />
            <ChangeBar />
            <Outline>
              <OutlineEnd />
              <FoldBox $top={426} />
              <OutlineLine $top={468} $h={222} />
              <FoldBox $top={695} />
              <OutlineLine $top={737} $h={150} />
            </Outline>
            <CodeArea>
              {codeLines.map((l, i) => (
                <CodeLine key={i}>
                  <CodeText $sel={l.sel} $t={l.t} $b={l.b}><Code toks={l.toks} /></CodeText>
                </CodeLine>
              ))}
              <Caretline />
              <Guide $left={11} $top={620} />
              <Guide $left={121} $top={822} />
              <Squiggle width="132" height="13" viewBox="0 0 132 13" fill="none">
                <path d="M1 2 L13 11 L25 2 L37 11 L49 2 L61 11 L73 2 L85 11 L97 2 L109 11 L121 2 L131 10" stroke="#a4d65e" strokeWidth="3" />
              </Squiggle>
            </CodeArea>
            <VScroll>
              <ArrowUp />
              <Mark $l={19} $t={27} $w={9} $h={2} $c="#999" />
              <Mark $l={2} $t={368} $w={6} $h={453} $c="#576f2e" />
              <Mark $l={8} $t={708} $w={14} $h={42} $c="#686868" />
              <Mark $l={0} $t={726} $w={28} $h={2} $c="#e8e8e8" />
              <Mark $l={20} $t={741} $w={7} $h={9} $c="#8fdc82" />
              <Mark $l={10} $t={809} $w={8} $h={9} $c="#7a2f3a" />
              <ArrowDown />
            </VScroll>
          </EditorRow>
          <StatusBar>
            <ZoomBox>281 %<Caret $c="#f1f1f1" /></ZoomBox>
            <Slot $w={19} $ml={40}><ErrorIcon /></Slot>
            <StatusText $ml={7} $w={24}>0</StatusText>
            <Slot $w={19} $ml={22}><WarnIcon /></Slot>
            <StatusText $ml={7} $w={10}>2</StatusText>
            <Slot $w={18} $ml={47}><ArrowLeft c="#75beff" w={18} h={14} /></Slot>
            <Slot $w={18} $ml={26}><ArrowRight c="#75beff" w={18} h={14} /></Slot>
            <TriLeft $ml={49} />
            <HThumb />
            <TriRight $ml={512} />
            <StatusText $ml={41} $w={83}>行: 230</StatusText>
            <StatusText $ml={0} $w={81}>字符: 1</StatusText>
            <StatusText $ml={0} $w={81}>制表符</StatusText>
            <StatusText $ml={0}>CRLF</StatusText>
          </StatusBar>
          <ParallelPanel>
            <PanelTitle $h={35}>
              并行监视 1 - main
              <TitleGrip />
              <PanelBtns><Caret $c="#f1f1f1" /><PinV /><Close w={15} h={12} /></PanelBtns>
            </PanelTitle>
            <ParallelTools>
              <Slot $w={22} $ml={10}><Filter c="#4f4f4f" /></Slot>
              <Sep $ml={13} />
              <Slot $w={22} $ml={14}><GridIcon /></Slot>
              <Slot $w={9} $ml={14}><Caret /></Slot>
              <FilterInput>
                <FilterInner><span>按布尔表达式筛选</span><Magnifier /></FilterInner>
                <Slot $w={10} $ml={4}><Caret $c="#f1f1f1" /></Slot>
              </FilterInput>
            </ParallelTools>
            <ParHead>
              <ParCol $w={37} />
              <ParCol $w={38} />
              <ParCol $w={180}>[线程]</ParCol>
              <ParCol $w={0}><ParHint>&lt;添加监视&gt;</ParHint></ParCol>
            </ParHead>
            <ParBody>
              <ParBodyCol $w={37} />
              <ParBodyCol $w={38} />
              <ParBodyCol $w={180} />
            </ParBody>
          </ParallelPanel>
        </LeftCol>

        <WatchPanel>
          <WatchTop>
            <PanelTitle $h={35}>
              <span>监视 1</span>
              <TitleGrip />
            </PanelTitle>
            <WatchTools>
              <WatchSearch>
                <FilterInner><span>搜索(Ctrl+E)</span><Magnifier /></FilterInner>
                <Slot $w={10} $ml={4}><Caret $c="#f1f1f1" /></Slot>
              </WatchSearch>
              <Slot $w={22} $ml={12}><ArrowLeft c="#5a5a5a" w={22} h={17} /></Slot>
              <Slot $w={22} $ml={12}><ArrowRight c="#5a5a5a" w={22} h={17} /></Slot>
              <Label $ml={10} $w={77}>搜索深度:</Label>
              <DepthCombo>3<Caret $c="#666" /></DepthCombo>
              <Sep $ml={12} />
              <Slot $w={22} $ml={10}><PinFilter /></Slot>
              <ActiveBtn><PinTab /></ActiveBtn>
            </WatchTools>
          </WatchTop>
          <WatchHead>
            <HeadLead />
            <HeadCell $w={292}>名称</HeadCell>
            <HeadCell $w={438.5}>值</HeadCell>
            <HeadCell $w={86}>类型</HeadCell>
          </WatchHead>
          <Rows>
            {watchRows.map((r, i) => (
              <Row key={i}>
                <NameCell $hot={r.hot}>
                  {r.lead ? (
                    <>
                      <Indent $w={18}><TriOpen /></Indent>
                      <Slot $w={17} $ml={11}><Cube /></Slot>
                      <Label $ml={10} $c="#f1f1f1">{r.name}</Label>
                    </>
                  ) : (
                    <>
                      <Indent $w={41}>{r.name === '_array' && <TriClosed />}</Indent>
                      <Slot $w={17} $ml={13}><MemberIcon /></Slot>
                      <Label $ml={10} $c="#f1f1f1">{r.name}</Label>
                    </>
                  )}
                </NameCell>
                <ValCell $w={438.5} $hot={r.hot}>{r.val}</ValCell>
                <ValCell $w={86} $hot={r.hot}>{r.ty}</ValCell>
              </Row>
            ))}
            <Row>
              <NameCell><AddHint>添加要监视的项</AddHint></NameCell>
              <ValCell $w={438.5} />
              <ValCell $w={86} />
            </Row>
            <RedBox $t={25} $l={24} $h={35} />
            <RedBox $t={135} $l={27} $h={27} />
          </Rows>
        </WatchPanel>
      </Workspace>
      <Watermark>CSDN @落水 zh</Watermark>
    </Page>
  );
}
